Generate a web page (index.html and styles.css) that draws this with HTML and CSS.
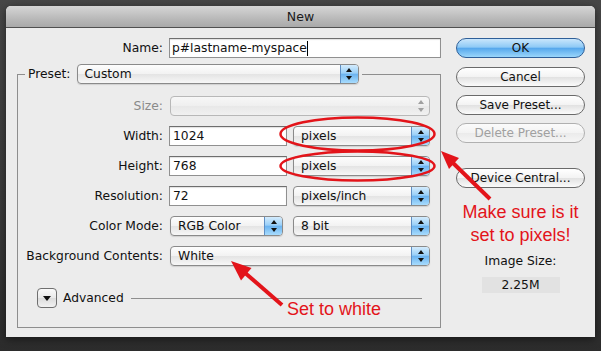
FILE: index.html
```html
<!DOCTYPE html>
<html lang="en">
<head>
    <meta charset="UTF-8">
    <title>New</title>
    <link rel="stylesheet" href="styles.css">
</head>
<body>
    <div class="dialog">
        <div class="titlebar">New</div>
        <div class="content">
            <div class="main">
                <div class="name-row">
                    <label class="label" for="name">Name:</label>
                    <div class="textfield name" id="name">p#lastname-myspace<span class="caret"></span></div>
                </div>
                <fieldset class="group">
                    <legend class="legend">
                        <span class="label">Preset:</span>
                        <div class="popup preset"><span class="value">Custom</span><span class="stepper"></span></div>
                    </legend>
                    <div class="row first">
                        <span class="label dim">Size:</span>
                        <div class="popup full disabled"><span class="value"></span><span class="stepper"></span></div>
                    </div>
                    <div class="row">
                        <span class="label">Width:</span>
                        <div class="textfield num">1024</div>
                        <div class="popup unit"><span class="value">pixels</span><span class="stepper"></span></div>
                    </div>
                    <div class="row">
                        <span class="label">Height:</span>
                        <div class="textfield num">768</div>
                        <div class="popup unit"><span class="value">pixels</span><span class="stepper"></span></div>
                    </div>
                    <div class="row">
                        <span class="label">Resolution:</span>
                        <div class="textfield num">72</div>
                        <div class="popup unit"><span class="value">pixels/inch</span><span class="stepper"></span></div>
                    </div>
                    <div class="row">
                        <span class="label">Color Mode:</span>
                        <div class="popup mode"><span class="value">RGB Color</span><span class="stepper"></span></div>
                        <div class="popup unit"><span class="value">8 bit</span><span class="stepper"></span></div>
                    </div>
                    <div class="row">
                        <span class="label">Background Contents:</span>
                        <div class="popup full"><span class="value">White</span><span class="stepper"></span></div>
                    </div>
                    <div class="advanced">
                        <span class="disclosure"></span>
                        <span class="adv-text">Advanced</span>
                        <span class="adv-line"></span>
                    </div>
                </fieldset>
            </div>
            <div class="side">
                <button class="btn default">OK</button>
                <button class="btn">Cancel</button>
                <button class="btn">Save Preset...</button>
                <button class="btn" disabled>Delete Preset...</button>
                <button class="btn device">Device Central...</button>
                <p class="note">Make sure is it<br>set to pixels!</p>
                <div class="size-label">Image Size:</div>
                <div class="size-value">2.25M</div>
            </div>
        </div>
    </div>

    <div class="note note-white">Set to white</div>

    <svg class="marks" width="601" height="351" viewBox="0 0 601 351">
        <ellipse cx="357.5" cy="134" rx="77" ry="16.5" fill="none" stroke="#e3141a" stroke-width="2.5"/>
        <ellipse cx="357.5" cy="166" rx="77" ry="14.5" fill="none" stroke="#e3141a" stroke-width="2.5"/>
        <line x1="490" y1="199" x2="452" y2="162" stroke="#e3141a" stroke-width="4"/>
        <polygon points="441,151 459,158 449,169" fill="#e3141a"/>
        <line x1="282" y1="305" x2="244" y2="272" stroke="#e3141a" stroke-width="4"/>
        <polygon points="231,261 251.5,268 241,280.5" fill="#e3141a"/>
    </svg>
</body>
</html>
```

FILE: styles.css
```css
body {
    margin: 0;
    width: 601px;
    height: 351px;
    position: relative;
    overflow: hidden;
    background: linear-gradient(#474747, #3a3a3a 60%, #2c2c2c);
    font-family: "DejaVu Sans", sans-serif;
    font-size: 12.3px;
    color: #111;
}
.dialog {
    margin: 6px 0 0 6px;
    width: 589px;
    height: 331px;
    background: #ececec;
    border-radius: 5px 5px 0 0;
    box-shadow: 0 2px 8px rgba(0, 0, 0, 0.5);
}
.titlebar {
    height: 21px;
    line-height: 21px;
    text-align: center;
    font-size: 12.5px;
    color: #1a1a1a;
    background: linear-gradient(#d6d6d6, #b9b9b9 60%, #a9a9a9);
    border-bottom: 1px solid #505050;
    border-radius: 5px 5px 0 0;
}
.content {
    display: flex;
    padding: 10px 0 0 11px;
}
.main {
    width: 424px;
}
.name-row {
    display: flex;
    align-items: center;
    height: 20px;
}
.label {
    flex: none;
    width: 145px;
    text-align: right;
    margin-right: 7px;
    white-space: nowrap;
}
.name-row .label {
    width: 146px;
    margin-right: 6px;
}
.label.dim {
    color: #8a8a8a;
}
.textfield {
    box-sizing: border-box;
    height: 20px;
    line-height: 18px;
    padding-left: 3px;
    background: #fff;
    border: 1px solid #909090;
    border-top-color: #6e6e6e;
    box-shadow: inset 0 1px 1px rgba(0, 0, 0, 0.12);
    font-size: 12.3px;
    display: flex;
    align-items: center;
}
.textfield.name {
    width: 272px;
    padding-left: 2px;
}
.caret {
    width: 1px;
    height: 15px;
    background: #000;
}
.textfield.num {
    width: 118px;
    margin-left: -1px;
    margin-right: 6px;
}
.group {
    margin: 6px 0 0 0;
    padding: 0 0 19px 0;
    border: 1px solid #8e8e8e;
    width: 424px;
    box-sizing: border-box;
    min-width: 0;
}
.legend {
    display: flex;
    align-items: center;
    margin-left: 7px;
    padding: 0 3px;
}
.legend .label {
    width: auto;
    margin-right: 6px;
}
.popup {
    box-sizing: border-box;
    display: flex;
    height: 20px;
    border: 1px solid #8a8a8a;
    border-radius: 4px;
    background: linear-gradient(#fdfdfd, #f2f2f2 50%, #e4e4e4 52%, #f7f7f7);
    box-shadow: 0 1px 1px rgba(0, 0, 0, 0.12);
    font-size: 12.3px;
}
.popup .value {
    flex: 1;
    padding-left: 7px;
    line-height: 18px;
}
.stepper {
    position: relative;
    width: 17px;
    border-left: 1px solid #5f8fc4;
    border-radius: 0 3px 3px 0;
    background: linear-gradient(#d4ecfd, #99cff8 45%, #6cb4f0 52%, #a8dcfd);
}
.stepper::before,
.stepper::after {
    content: "";
    position: absolute;
    left: 50%;
    margin-left: -3px;
    border-left: 3px solid transparent;
    border-right: 3px solid transparent;
}
.stepper::before {
    top: 3px;
    border-bottom: 4px solid #111;
}
.stepper::after {
    bottom: 3px;
    border-top: 4px solid #111;
}
.popup.preset {
    width: 282px;
}
.popup.full {
    width: 260px;
}
.popup.unit {
    width: 137px;
}
.popup.mode {
    width: 113px;
    margin-right: 10px;
}
.popup.disabled {
    border-color: #b8b8b8;
    box-shadow: none;
    background: linear-gradient(#f7f7f7, #efefef 50%, #e8e8e8 52%, #f1f1f1);
}
.popup.disabled .stepper {
    background: none;
    border-left: none;
}
.popup.disabled .stepper::before {
    border-bottom-color: #a0a0a0;
}
.popup.disabled .stepper::after {
    border-top-color: #a0a0a0;
}
.row {
    display: flex;
    align-items: center;
    height: 20px;
    margin-top: 10px;
}
.row.first {
    margin-top: 12px;
}
.advanced {
    display: flex;
    align-items: center;
    height: 20px;
    margin-top: 22px;
    padding-left: 19px;
    padding-right: 18px;
}
.disclosure {
    position: relative;
    box-sizing: border-box;
    width: 20px;
    height: 20px;
    border: 1px solid #6f6f6f;
    border-radius: 4px;
    background: linear-gradient(#fafafa, #e9e9e9 50%, #dcdcdc 52%, #f2f2f2);
}
.disclosure::after {
    content: "";
    position: absolute;
    left: 5px;
    top: 7px;
    border-left: 4px solid transparent;
    border-right: 4px solid transparent;
    border-top: 5px solid #111;
}
.adv-text {
    margin-left: 6px;
    font-size: 12.3px;
}
.adv-line {
    flex: 1;
    height: 1px;
    margin-left: 7px;
    background: #8e8e8e;
}
.side {
    width: 129px;
    margin-left: 15px;
    display: flex;
    flex-direction: column;
    align-items: center;
}
.btn {
    width: 129px;
    height: 20px;
    padding: 0;
    margin-bottom: 8px;
    border: 1px solid #6a6a6a;
    border-radius: 10px;
    background: linear-gradient(#ffffff, #f3f3f3 50%, #e2e2e2 52%, #fbfbfb);
    font-family: "DejaVu Sans", sans-serif;
    font-size: 12px;
    color: #111;
}
.btn.default {
    margin-bottom: 9px;
    border-color: #2f5f98;
    background: linear-gradient(#c9e6fc, #8fcaf6 45%, #57a8ec 52%, #9ad6fb);
}
.btn:disabled {
    color: #a0a0a0;
    border-color: #b0b0b0;
    background: linear-gradient(#fbfbfb, #f3f3f3 50%, #ebebeb 52%, #f5f5f5);
}
.btn.device {
    margin-top: 17px;
    margin-bottom: 0;
}
.note {
    margin: 13px 0 0 0;
    font-family: "Liberation Sans", Arial, sans-serif;
    font-size: 18px;
    line-height: 23px;
    color: #e3141a;
    text-align: center;
}
.size-label {
    margin-top: 7px;
    line-height: 15px;
}
.size-value {
    margin-top: 8px;
    width: 78px;
    height: 16px;
    line-height: 16px;
    text-align: center;
    background: #e2e2e2;
}
.note-white {
    position: absolute;
    left: 287px;
    top: 300px;
    margin: 0;
    line-height: 18px;
}
.marks {
    position: absolute;
    left: 0;
    top: 0;
    pointer-events: none;
}
```
